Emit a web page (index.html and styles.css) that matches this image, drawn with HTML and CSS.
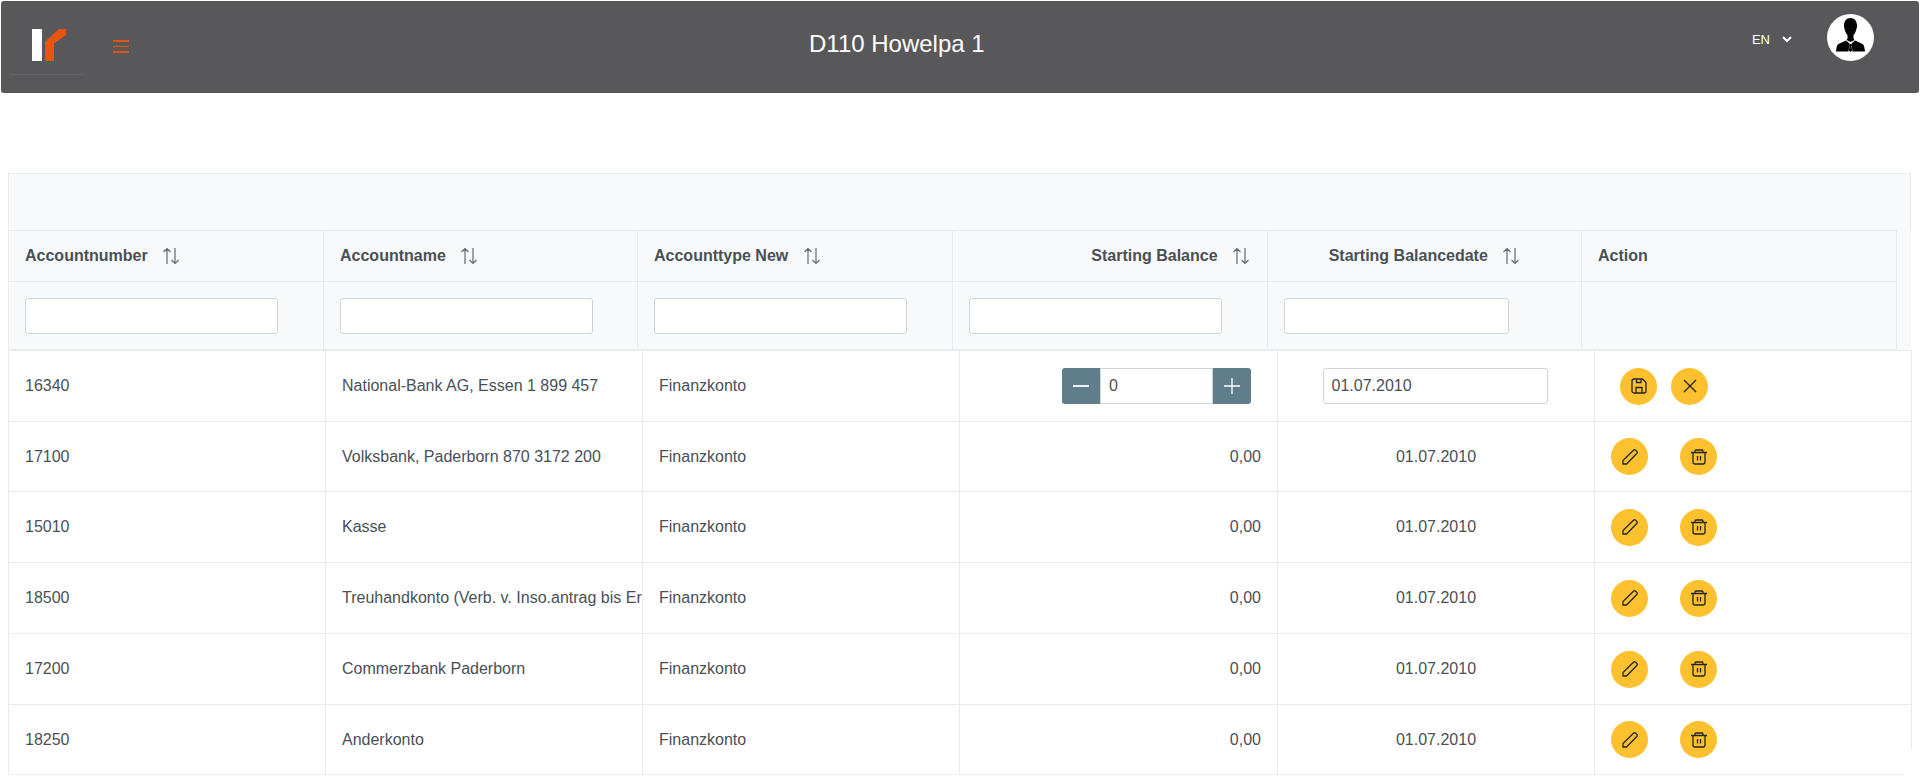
FILE: index.html
```html
<!DOCTYPE html>
<html>
<head>
  <title>D110 Howelpa 1</title>
  <meta name="viewport" content="width=device-width, initial-scale=1">
  <link rel="stylesheet" href="styles.css">
</head>
<body>
  <svg class="icon-defs" width="0" height="0">
    <symbol id="i-sort" viewBox="0 0 18 18">
      <path d="M5 17V1.500M1.500 5 5 1.500 8.500 5M13 1v15.500M9.500 13l3.500 3.500 3.500-3.500" fill="none" stroke-width="1.200"/>
    </symbol>
    <symbol id="i-save" viewBox="0 0 16 16">
      <path d="M3 1h8.500L15 4.500V13a2 2 0 0 1-2 2H3a2 2 0 0 1-2-2V3a2 2 0 0 1 2-2zM5 15V9.500h6V15M5.500 1v3.500h4.500V1" fill="none" stroke-width="1.300"/>
    </symbol>
    <symbol id="i-close" viewBox="0 0 16 16">
      <path d="M2 2l12 12M14 2 2 14" fill="none" stroke-width="1.300"/>
    </symbol>
    <symbol id="i-edit" viewBox="0 0 16 16">
      <path d="M1 15v-3.500L11.500 1.200a1.500 1.500 0 0 1 2.100 0l1.200 1.200a1.500 1.500 0 0 1 0 2.100L4.500 15z" fill="none" stroke-width="1.300"/>
    </symbol>
    <symbol id="i-trash" viewBox="0 0 16 16">
      <path d="M0 3.500h16M2 3.500V13a2 2 0 0 0 2 2h8a2 2 0 0 0 2-2V3.500M4 3.500V2a1 1 0 0 1 1-1h6a1 1 0 0 1 1 1v1.500M6.500 7v4.500M9.500 7v4.500" fill="none" stroke-width="1.300"/>
    </symbol>
    <symbol id="i-minus" viewBox="0 0 16 16">
      <path d="M0 8h16" fill="none" stroke="#fff" stroke-width="1.800"/>
    </symbol>
    <symbol id="i-plus" viewBox="0 0 16 16">
      <path d="M0 8h16M8 0v16" fill="none" stroke="#fff" stroke-width="1.300"/>
    </symbol>
  </svg>

  <header class="topbar">
    <div class="brand">
      <svg class="logo" width="36" height="34" viewBox="0 0 36 34">
        <rect x="1" y="1" width="10" height="32" fill="#fff"/>
        <path d="M14 13.500 28 1h7v6L23 15.500V33H14z" fill="#e8530f"/>
      </svg>
    </div>
    <button class="menu-toggle" aria-label="Menu"><span></span><span></span><span></span></button>
    <div class="page-title">D110 Howelpa 1</div>
    <div class="lang">EN
      <svg width="10" height="7" viewBox="0 0 10 7"><path d="M1 1l4 4 4-4" fill="none" stroke="#fff" stroke-width="2"/></svg>
    </div>
    <div class="avatar">
      <svg width="47" height="47" viewBox="0 0 47 47">
        <path d="M23.500 4c4 0 6.500 3 6.500 7.500 0 2-.5 3.500-1 5-.6 2-1.600 3.500-2.500 4.500v3.500l1 1.500-4 2-4-2 1-1.500V21c-.9-1-1.900-2.500-2.500-4.500-.5-1.500-1-3-1-5C17 7 19.500 4 23.500 4z" fill="#000"/>
        <path d="M19 26.500l3.500 3-1 8H9c.4-3.500.8-6.500 2.500-7.500zM28 26.500l-3.500 3 1 8H38c-.4-3.500-.8-6.500-2.500-7.500z" fill="#000"/>
        <path d="M22.500 30h2l.4 1.500-.4 1 .6 4-1.600 1.500-1.600-1.500.6-4-.4-1z" fill="#000"/>
      </svg>
    </div>
  </header>

  <main class="content">
    <div class="table-caption"></div>

    <div class="head-wrap">
      <table class="grid grid-head">
        <thead>
          <tr class="head-row">
            <th>Accountnumber <svg class="sort"><use href="#i-sort"/></svg></th>
            <th>Accountname <svg class="sort"><use href="#i-sort"/></svg></th>
            <th>Accounttype New <svg class="sort"><use href="#i-sort"/></svg></th>
            <th class="right">Starting Balance <svg class="sort"><use href="#i-sort"/></svg></th>
            <th class="center">Starting Balancedate <svg class="sort"><use href="#i-sort"/></svg></th>
            <th>Action</th>
          </tr>
          <tr class="filter-row">
            <th><input class="field filter"></th>
            <th><input class="field filter"></th>
            <th><input class="field filter"></th>
            <th><input class="field filter"></th>
            <th><input class="field filter filter-date"></th>
            <th></th>
          </tr>
        </thead>
      </table>
    </div>

    <table class="grid grid-body">
      <tbody>
        <tr>
          <td>16340</td>
          <td>National-Bank AG, Essen 1 899 457</td>
          <td>Finanzkonto</td>
          <td class="right">
            <div class="stepper">
              <button class="step"><svg><use href="#i-minus"/></svg></button>
              <input class="field step-value" value="0">
              <button class="step"><svg><use href="#i-plus"/></svg></button>
            </div>
          </td>
          <td class="center"><input class="field edit-date" value="01.07.2010"></td>
          <td>
            <div class="actions actions-editing">
              <button class="round"><svg><use href="#i-save"/></svg></button>
              <button class="round"><svg><use href="#i-close"/></svg></button>
            </div>
          </td>
        </tr>
        <tr>
          <td>17100</td>
          <td>Volksbank, Paderborn 870 3172 200</td>
          <td>Finanzkonto</td>
          <td class="right">0,00</td>
          <td class="center">01.07.2010</td>
          <td><div class="actions"><button class="round"><svg><use href="#i-edit"/></svg></button><button class="round"><svg><use href="#i-trash"/></svg></button></div></td>
        </tr>
        <tr>
          <td>15010</td>
          <td>Kasse</td>
          <td>Finanzkonto</td>
          <td class="right">0,00</td>
          <td class="center">01.07.2010</td>
          <td><div class="actions"><button class="round"><svg><use href="#i-edit"/></svg></button><button class="round"><svg><use href="#i-trash"/></svg></button></div></td>
        </tr>
        <tr>
          <td>18500</td>
          <td>Treuhandkonto (Verb. v. Inso.antrag bis Er</td>
          <td>Finanzkonto</td>
          <td class="right">0,00</td>
          <td class="center">01.07.2010</td>
          <td><div class="actions"><button class="round"><svg><use href="#i-edit"/></svg></button><button class="round"><svg><use href="#i-trash"/></svg></button></div></td>
        </tr>
        <tr>
          <td>17200</td>
          <td>Commerzbank Paderborn</td>
          <td>Finanzkonto</td>
          <td class="right">0,00</td>
          <td class="center">01.07.2010</td>
          <td><div class="actions"><button class="round"><svg><use href="#i-edit"/></svg></button><button class="round"><svg><use href="#i-trash"/></svg></button></div></td>
        </tr>
        <tr>
          <td>18250</td>
          <td>Anderkonto</td>
          <td>Finanzkonto</td>
          <td class="right">0,00</td>
          <td class="center">01.07.2010</td>
          <td><div class="actions"><button class="round"><svg><use href="#i-edit"/></svg></button><button class="round"><svg><use href="#i-trash"/></svg></button></div></td>
        </tr>
      </tbody>
    </table>
  </main>
</body>
</html>
```

FILE: styles.css
```css
* {
  box-sizing: border-box;
}
html, body {
  margin: 0;
  padding: 0;
  height: 784px;
  overflow: hidden;
}
body {
  font-family: "Liberation Sans", Arial, sans-serif;
  font-size: 16px;
  color: #495057;
  background: #fff;
}
.icon-defs {
  display: block;
  height: 0;
}
.topbar {
  display: flex;
  align-items: flex-start;
  height: 92px;
  margin: 1px;
  background: #58585a;
  border-radius: 3px;
}
.brand {
  position: relative;
  width: 112px;
  height: 91px;
  padding: 27px 0 0 30px;
}
.brand::after {
  content: '';
  position: absolute;
  left: 9px;
  top: 73px;
  width: 73px;
  height: 1px;
  background: #636365;
}
.logo {
  display: block;
}
.menu-toggle {
  display: flex;
  flex-direction: column;
  gap: 4px;
  width: 16px;
  padding: 0;
  margin-top: 39px;
  border: 0;
  background: transparent;
}
.menu-toggle span {
  display: block;
  height: 1.500px;
  background: #e8530f;
}
.page-title {
  margin-left: 680px;
  margin-top: 29px;
  font-size: 24px;
  color: #fff;
}
.lang {
  display: flex;
  align-items: center;
  gap: 12px;
  margin-left: auto;
  margin-right: 35px;
  margin-top: 31px;
  font-size: 13px;
  color: #fff;
}
.avatar {
  width: 47px;
  height: 47px;
  margin-right: 45px;
  margin-top: 13px;
  border-radius: 50%;
  background: #fff;
  overflow: hidden;
}
.avatar svg {
  display: block;
}
.content {
  position: relative;
  padding: 79px 0 0 8px;
}
/* the table's right edge and last line stop short in the corner */
.content::after {
  content: '';
  position: absolute;
  left: 1904px;
  top: 655px;
  width: 10px;
  height: 30px;
  background: #fff;
}
.table-caption {
  width: 1903px;
  height: 57px;
  background: #f8f9fa;
  border: 1px solid #e9ecef;
  border-bottom: 0;
}
.head-wrap {
  width: 1903px;
  background: #f8f9fa;
}
.grid {
  table-layout: fixed;
  border-collapse: collapse;
}
.grid-head {
  width: 1888px;
  background: #f8f9fa;
}
.grid-body {
  width: 1903px;
}
.grid th, .grid td {
  padding: 0 16px;
  border: 1px solid #e9ecef;
  text-align: left;
  white-space: nowrap;
  overflow: hidden;
}
.grid th {
  font-weight: 700;
}
.grid .right {
  text-align: right;
}
.grid .center {
  text-align: center;
}
.grid th.right {
  padding-right: 17px;
}
.head-row {
  height: 51px;
}
.head-row th {
  width: 315px;
}
.head-row th:nth-child(2), .head-row th:nth-child(5) {
  width: 314px;
}
.filter-row {
  height: 68px;
}
.grid-body tr {
  height: 71px;
}
.grid-body tr:nth-child(2), .grid-body tr:nth-child(6) {
  height: 70px;
}
.grid-body tr:first-child td {
  width: 317px;
}
.grid-body tr:first-child td:nth-child(4) {
  width: 318px;
}
.sort {
  width: 18px;
  height: 18px;
  margin-left: 10px;
  vertical-align: -4px;
  stroke: #5f6b75;
}
.field {
  height: 36px;
  padding: 0 8px;
  border: 1px solid #ced4da;
  border-radius: 3px;
  background: #fff;
  font: inherit;
  color: inherit;
  outline: 0;
}
.filter {
  display: block;
  width: 253px;
}
.filter-date {
  width: 225px;
}
.edit-date {
  width: 225px;
  margin-right: 2px;
}
.stepper {
  display: inline-flex;
  width: 189px;
  margin-right: 10px;
  vertical-align: middle;
}
.step {
  display: flex;
  align-items: center;
  justify-content: center;
  width: 38px;
  height: 36px;
  padding: 0;
  border: 0;
  background: #607d8b;
}
.step svg {
  width: 16px;
  height: 16px;
}
.step:first-child {
  border-radius: 3px 0 0 3px;
}
.step:last-child {
  border-radius: 0 3px 3px 0;
}
.step-value {
  flex: 1;
  min-width: 0;
  border-radius: 0;
}
.actions {
  display: flex;
  gap: 32px;
}
.actions-editing {
  gap: 14px;
  padding-left: 9px;
}
.round {
  display: flex;
  align-items: center;
  justify-content: center;
  width: 37px;
  height: 37px;
  padding: 0;
  border: 0;
  border-radius: 50%;
  background: #fdc02f;
}
.round svg {
  width: 16px;
  height: 16px;
  stroke: #212529;
}
```
